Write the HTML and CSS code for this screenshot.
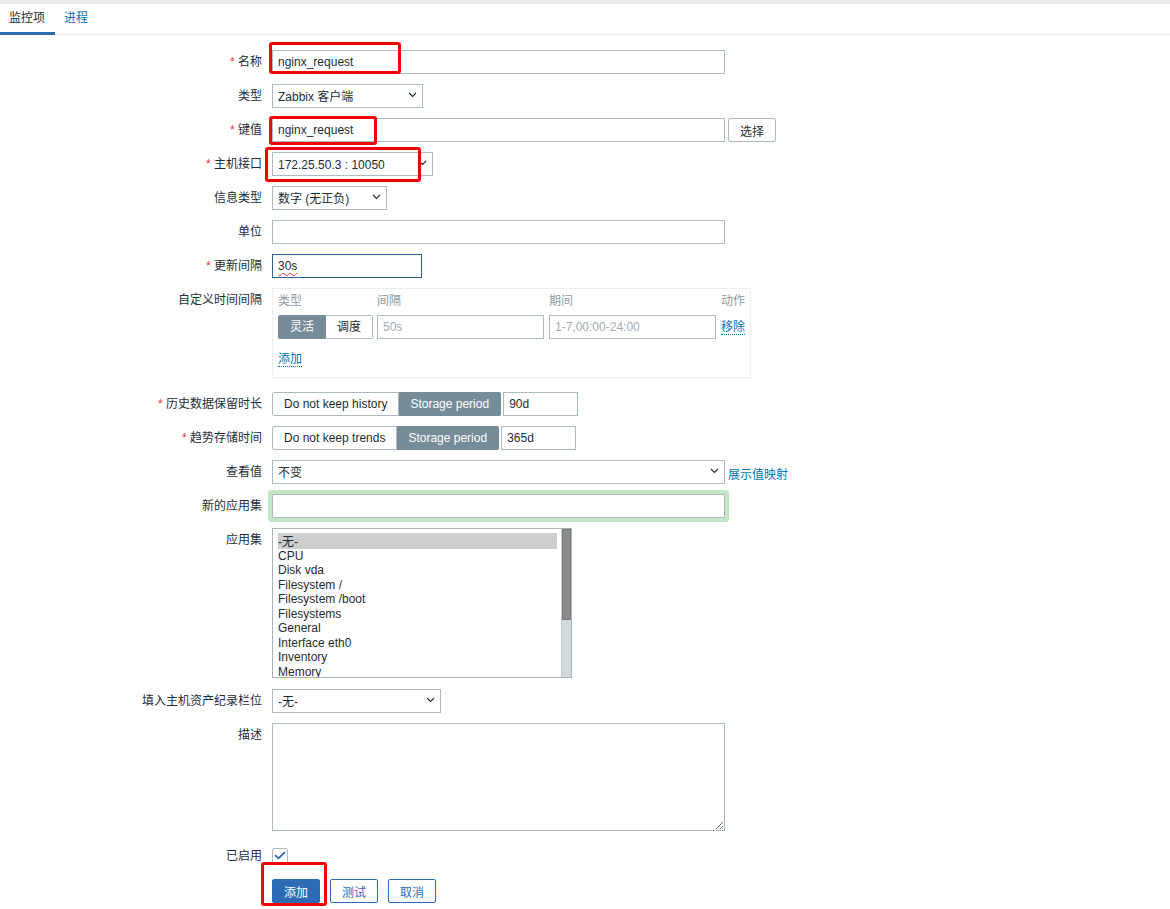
FILE: index.html
```html
<!DOCTYPE html>
<html lang="zh">
<head>
<meta charset="utf-8">
<title>监控项</title>
<link rel="stylesheet" href="styles.css">
</head>
<body>
<div class="page">
  <div class="topstrip"></div>
  <ul class="tabs">
    <li class="tab active">监控项</li>
    <li class="tab link">进程</li>
  </ul>

  <form class="form">
    <div class="row">
      <label class="lbl"><span class="req">*</span> 名称</label>
      <div class="ctl"><input class="input w453" type="text" value="nginx_request"></div>
    </div>
    <div class="row">
      <label class="lbl">类型</label>
      <div class="ctl"><div class="sel w151"><span class="sel-text">Zabbix 客户端</span><svg class="chev" viewBox="0 0 9 6"><path d="M1 1l3.5 3.5L8 1"/></svg></div></div>
    </div>
    <div class="row">
      <label class="lbl"><span class="req">*</span> 键值</label>
      <div class="ctl"><input class="input w453" type="text" value="nginx_request"><button type="button" class="btn-grey">选择</button></div>
    </div>
    <div class="row">
      <label class="lbl"><span class="req">*</span> 主机接口</label>
      <div class="ctl"><div class="sel w161"><span class="sel-text">172.25.50.3 : 10050</span><svg class="chev" viewBox="0 0 9 6"><path d="M1 1l3.5 3.5L8 1"/></svg></div></div>
    </div>
    <div class="row">
      <label class="lbl">信息类型</label>
      <div class="ctl"><div class="sel w115"><span class="sel-text">数字 (无正负)</span><svg class="chev" viewBox="0 0 9 6"><path d="M1 1l3.5 3.5L8 1"/></svg></div></div>
    </div>
    <div class="row">
      <label class="lbl">单位</label>
      <div class="ctl"><input class="input w453" type="text" value=""></div>
    </div>
    <div class="row">
      <label class="lbl"><span class="req">*</span> 更新间隔</label>
      <div class="ctl"><div class="input w150 focused"><span class="spell">30s</span></div></div>
    </div>
    <div class="row row-intervals">
      <label class="lbl">自定义时间间隔</label>
      <div class="ctl">
        <div class="intervals">
          <div class="iv-head">
            <span class="c-type">类型</span>
            <span class="c-int">间隔</span>
            <span class="c-per">期间</span>
            <span class="c-act">动作</span>
          </div>
          <div class="iv-row">
            <div class="seg c-type">
              <span class="seg-item on">灵活</span><span class="seg-item">调度</span>
            </div>
            <div class="input c-int ph">50s</div>
            <div class="input c-per ph">1-7,00:00-24:00</div>
            <a class="dlink c-act">移除</a>
          </div>
          <div class="iv-add"><a class="dlink">添加</a></div>
        </div>
      </div>
    </div>
    <div class="row">
      <label class="lbl"><span class="req">*</span> 历史数据保留时长</label>
      <div class="ctl">
        <div class="seg"><span class="seg-item">Do not keep history</span><span class="seg-item on">Storage period</span></div>
        <input class="input w75 after-seg" type="text" value="90d">
      </div>
    </div>
    <div class="row">
      <label class="lbl"><span class="req">*</span> 趋势存储时间</label>
      <div class="ctl">
        <div class="seg"><span class="seg-item">Do not keep trends</span><span class="seg-item on">Storage period</span></div>
        <input class="input w75 after-seg" type="text" value="365d">
      </div>
    </div>
    <div class="row">
      <label class="lbl">查看值</label>
      <div class="ctl"><div class="sel w453"><span class="sel-text">不变</span><svg class="chev" viewBox="0 0 9 6"><path d="M1 1l3.5 3.5L8 1"/></svg></div><a class="plain-link">展示值映射</a></div>
    </div>
    <div class="row">
      <label class="lbl">新的应用集</label>
      <div class="ctl"><input class="input w453 glow" type="text" value=""></div>
    </div>
    <div class="row row-list">
      <label class="lbl">应用集</label>
      <div class="ctl">
        <div class="listbox">
          <div class="opts">
            <div class="opt selected">-无-</div>
            <div class="opt">CPU</div>
            <div class="opt">Disk vda</div>
            <div class="opt">Filesystem /</div>
            <div class="opt">Filesystem /boot</div>
            <div class="opt">Filesystems</div>
            <div class="opt">General</div>
            <div class="opt">Interface eth0</div>
            <div class="opt">Inventory</div>
            <div class="opt">Memory</div>
          </div>
          <div class="sb"><div class="thumb"></div></div>
        </div>
      </div>
    </div>
    <div class="row">
      <label class="lbl">填入主机资产纪录栏位</label>
      <div class="ctl"><div class="sel w169"><span class="sel-text">-无-</span><svg class="chev" viewBox="0 0 9 6"><path d="M1 1l3.5 3.5L8 1"/></svg></div></div>
    </div>
    <div class="row row-desc">
      <label class="lbl">描述</label>
      <div class="ctl"><textarea class="textarea"></textarea></div>
    </div>
    <div class="row row-check">
      <label class="lbl lbl-check">已启用</label>
      <div class="ctl">
        <span class="checkbox"><svg viewBox="0 0 16 16"><path d="M3 7.6l3.2 3.1L13 4.2"/></svg></span>
      </div>
    </div>
    <div class="row row-buttons">
      <div class="lbl"></div>
      <div class="ctl buttons">
        <button type="button" class="btn-primary">添加</button>
        <button type="button" class="btn-alt">测试</button>
        <button type="button" class="btn-alt">取消</button>
      </div>
    </div>
  </form>

  <div class="mark mark1"></div>
  <div class="mark mark2"></div>
  <div class="mark mark3"></div>
  <div class="mark mark4"></div>
</div>
</body>
</html>
```
FILE: styles.css
```css
html, body {
  margin: 0;
  padding: 0;
  background: #ffffff;
}
body {
  font-family: "Liberation Sans", Arial, "Noto Sans CJK SC", sans-serif;
  font-size: 12px;
  color: #1f2c33;
}
.page {
  position: relative;
  min-height: 909px;
}
.topstrip {
  height: 4px;
  background: #e9ebee;
}
.tabs {
  display: flex;
  list-style: none;
  margin: 0;
  padding: 0;
  height: 30px;
  border-bottom: 1px solid #ebeef0;
}
.tab {
  box-sizing: border-box;
  height: 31px;
  line-height: 29px;
  padding: 0 10px 0 9px;
  font-size: 12px;
}
.tab.active {
  border-bottom: 3px solid #2c6cb4;
  color: #1f2c33;
}
.tab.link {
  color: #0275b8;
}

.form {
  padding-top: 15px;
}
.row {
  display: flex;
  align-items: flex-start;
  gap: 10px;
  margin-bottom: 10px;
}
.lbl {
  flex: none;
  width: 262px;
  text-align: right;
  line-height: 24px;
  white-space: nowrap;
}
.req {
  color: #e33734;
}
.ctl {
  display: flex;
  align-items: center;
}

.input {
  box-sizing: border-box;
  height: 24px;
  border: 1px solid #acbbc2;
  background: #fff;
  padding: 0 5px;
  font-family: inherit;
  font-size: 12px;
  color: #1f2c33;
  line-height: 22px;
  margin: 0;
  outline: none;
}
.w453 { width: 453px; }
.w150 { width: 150px; }
.w75 { width: 75px; }
.focused {
  border-color: #2d5f9e;
}
.spell {
  text-decoration: underline wavy #e0323a;
  text-decoration-thickness: 1px;
  text-underline-offset: 2px;
}
.glow {
  box-shadow: 0 0 0 4px #c2e7c5;
  border-radius: 1px;
}

.sel {
  box-sizing: border-box;
  height: 24px;
  border: 1px solid #acbbc2;
  background: #fff;
  padding: 0 5px 0 5px;
  display: flex;
  align-items: center;
  justify-content: space-between;
  line-height: 22px;
}
.sel-text {
  padding-top: 3px;
  line-height: 19px;
}
.w151 { width: 151px; }
.w161 { width: 161px; }
.w115 { width: 115px; }
.w169 { width: 169px; }
.chev {
  width: 9px;
  height: 6px;
  fill: none;
  stroke: #1f2c33;
  stroke-width: 1.1;
  margin-top: -2px;
}

.btn-grey {
  box-sizing: border-box;
  height: 24px;
  width: 48px;
  margin-left: 3px;
  border: 1px solid #acbbc2;
  border-radius: 2px;
  background: #fff;
  font-family: inherit;
  font-size: 12px;
  color: #1f2c33;
  padding: 0;
}

.row-intervals {
  margin-bottom: 14px;
}
.intervals {
  box-sizing: border-box;
  width: 479px;
  height: 90px;
  border: 1px solid #ebeef0;
  padding: 0 5px;
}
.iv-head {
  display: flex;
  height: 24px;
  line-height: 24px;
  color: #8d9aa2;
}
.iv-row {
  display: flex;
  align-items: center;
  height: 24px;
  margin-top: 2px;
}
.c-type { width: 95px; margin-right: 4px; flex: none; }
.c-int { width: 167px; margin-right: 5px; flex: none; }
.c-per { width: 167px; margin-right: 5px; flex: none; }
.c-act { flex: none; }
.iv-head .c-type { width: 99px; margin-right: 0; }
.iv-head .c-int { width: 172px; margin-right: 0; }
.iv-head .c-per { width: 172px; margin-right: 0; }
.ph {
  color: #a3acb1;
}
.iv-add {
  margin-top: 11px;
  line-height: 18px;
}
.dlink {
  color: #0275b8;
  border-bottom: 1px dotted #0275b8;
  cursor: pointer;
  line-height: 14px;
  display: inline-block;
}
.plain-link {
  color: #0275b8;
  margin-left: 3px;
  padding-top: 2px;
}

.seg {
  display: flex;
  box-sizing: border-box;
  height: 24px;
}
.seg-item {
  box-sizing: border-box;
  height: 24px;
  line-height: 22px;
  padding: 0 11px;
  border: 1px solid #acbbc2;
  background: #fff;
  color: #1f2c33;
  white-space: nowrap;
}
.seg-item:first-child {
  border-radius: 2px 0 0 2px;
}
.seg-item:last-child {
  border-radius: 0 2px 2px 0;
}
.seg-item + .seg-item {
  border-left: none;
}
.seg-item.on {
  background: #768d99;
  border-color: #768d99;
  color: #ffffff;
}
.intervals .seg-item {
  width: 48px;
  padding: 0;
  text-align: center;
}
.intervals .seg-item + .seg-item {
  width: 47px;
}
.after-seg {
  margin-left: 2px;
}

.row-list {
  margin-bottom: 11px;
}
.listbox {
  box-sizing: border-box;
  width: 300px;
  height: 150px;
  border: 1px solid #a9b4ba;
  display: flex;
  overflow: hidden;
}
.opts {
  flex: 1;
  padding: 4px 4px 0 5px;
  overflow: hidden;
}
.opt {
  height: 14.5px;
  line-height: 14.5px;
  white-space: nowrap;
  color: #1f2c33;
}
.opt.selected {
  background: #cecece;
  height: 16px;
  line-height: 18px;
  margin-bottom: -0.5px;
}
.sb {
  width: 9px;
  flex: none;
  background: #d1d9dd;
  border-left: 1px solid #c4ccd0;
}
.thumb {
  height: 91px;
  background: #8b8b8b;
  border: 1px solid #7b7b7b;
  box-sizing: border-box;
}

.row-desc {
  margin-bottom: 17px;
}
.textarea {
  box-sizing: border-box;
  width: 453px;
  height: 108px;
  border: 1px solid #acbbc2;
  font-family: inherit;
  font-size: 12px;
  margin: 0;
  padding: 4px 5px;
  resize: both;
  outline: none;
}

.row-check {
  margin-bottom: 15px;
}
.lbl-check {
  line-height: 16px;
}
.checkbox {
  box-sizing: border-box;
  display: block;
  width: 16px;
  height: 16px;
  border: 1px solid #acbbc2;
  border-radius: 2px;
  background: #fff;
}
.checkbox svg {
  display: block;
  width: 14px;
  height: 14px;
  fill: none;
  stroke: #2c6cb4;
  stroke-width: 2.2;
  stroke-linecap: round;
  stroke-linejoin: round;
}

.buttons {
  gap: 10px;
}
.btn-primary, .btn-alt {
  box-sizing: border-box;
  height: 24px;
  width: 48px;
  padding: 0;
  border-radius: 2px;
  font-family: inherit;
  font-size: 12px;
}
.btn-primary {
  background: #2c6cb4;
  border: 1px solid #2c6cb4;
  color: #ffffff;
}
.btn-alt {
  background: #ffffff;
  border: 1px solid #2c6cb4;
  color: #2c6cb4;
}

.mark {
  position: absolute;
  box-sizing: border-box;
  border: 3px solid #f30000;
  border-radius: 3px;
  pointer-events: none;
}
.mark1 { left: 269px; top: 42px; width: 132px; height: 32px; }
.mark2 { left: 269px; top: 116px; width: 108px; height: 29px; }
.mark3 { left: 265px; top: 147px; width: 156px; height: 35px; }
.mark4 { left: 261px; top: 862px; width: 66px; height: 44px; }
```
